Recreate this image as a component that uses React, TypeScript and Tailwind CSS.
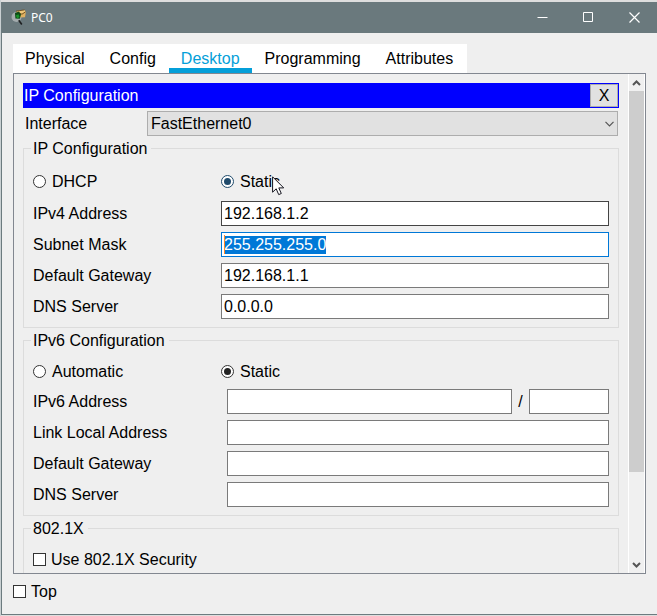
import { useEffect, useRef, type ReactNode } from "react";

const inputClass =
  "block h-[25px] w-full min-w-0 border bg-white px-[2px] leading-[19px] text-black outline-none selection:bg-[#0078d7] selection:text-white";

const tabs = ["Physical", "Config", "Desktop", "Programming", "Attributes"];

function PacketIcon() {
  return (
    <svg width="16" height="17" viewBox="0 0 16 17" aria-hidden="true">
      <circle cx="5.5" cy="8" r="5" fill="#a3abad" />
      <path d="M5 2.2 13 .8l1.8 2.4-.8 5L8 8.5z" fill="#e0b060" />
      <path d="M5.5 2.2 13.5 1l1.2 1.6L10.5 5z" fill="#f0c878" />
      <path d="M5 2.2 13.5.9M8 4.2l3 1 3.6-2.4" stroke="#5a3c14" strokeWidth=".8" fill="none" />
      <path d="M4 4 8 2.6l2 3-1.2 4.2-4.4-.2z" fill="#0d4a16" />
      <path d="M4.8 6.6 7.5 5.2l1 2.8-2.3 1.6z" fill="#17952a" />
      <path d="m7.8 11.2 3 4.3" stroke="#1d1f20" strokeWidth="1.6" />
    </svg>
  );
}

function Group({ title, children }: { title: string; children: ReactNode }) {
  return (
    <fieldset className="min-w-0 border border-[#dcdcdc] px-[7px] pb-2">
      <legend className="h-[19px] pr-1 pl-[2px] leading-[19px]">{title}</legend>
      <div className="px-[2px]">{children}</div>
    </fieldset>
  );
}

function Radio({
  name,
  label,
  checked = false,
  tone = "border-[#333333] before:bg-[#222222]",
  children,
}: {
  name: string;
  label: string;
  checked?: boolean;
  tone?: string;
  children?: ReactNode;
}) {
  return (
    <label className="relative flex h-[19px] items-center gap-[6px]">
      <input
        type="radio"
        name={name}
        defaultChecked={checked}
        className={`grid size-[13px] shrink-0 appearance-none place-content-center rounded-full border bg-white before:size-[7px] before:rounded-full before:opacity-0 checked:before:opacity-100 ${tone}`}
      />
      {label}
      {children}
    </label>
  );
}

function Check({ label }: { label: string }) {
  return (
    <label className="flex h-[19px] items-center gap-[5px]">
      <input
        type="checkbox"
        className="size-[13px] shrink-0 appearance-none border border-[#333333] bg-white checked:bg-[#333333]"
      />
      {label}
    </label>
  );
}

function Row({ id, label, wide = false, children }: { id: string; label: string; wide?: boolean; children: ReactNode }) {
  return (
    <div className="flex items-center">
      <label htmlFor={id} className={`shrink-0 leading-[19px] ${wide ? "w-[194px]" : "w-[188px]"}`}>
        {label}
      </label>
      <div className="relative flex min-w-0 flex-1 items-center">{children}</div>
    </div>
  );
}

export default function App() {
  const mask = useRef<HTMLInputElement>(null);

  useEffect(() => {
    mask.current?.focus();
    mask.current?.select();
  }, []);

  return (
    <div className="flex h-screen flex-col border-l border-[#c9d0d2] bg-[#dedede] pt-[2px] pb-px font-['Liberation_Sans',Arial,sans-serif] text-base text-black">
      <div className="flex min-h-0 flex-1 flex-col border-b border-l border-[#6c7b7f] bg-[#efefef]">
        <header className="flex h-[31px] shrink-0 items-center bg-[#6a797d] pl-[9px] text-white">
          <PacketIcon />
          <h1 className="ml-1 flex-1 font-['Noto_Sans','Open_Sans',sans-serif] text-xs">PC0</h1>
          <button aria-label="Minimize" className="grid h-full w-[46px] place-content-center">
            <svg width="11" height="11" viewBox="0 0 11 11" stroke="currentColor">
              <path d="M.5 5.5h10" />
            </svg>
          </button>
          <button aria-label="Maximize" className="grid h-full w-[46px] place-content-center">
            <svg width="11" height="11" viewBox="0 0 11 11" stroke="currentColor" fill="none">
              <path d="M.5.5h9v9h-9z" />
            </svg>
          </button>
          <button aria-label="Close" className="grid h-full w-[46px] place-content-center">
            <svg width="11" height="11" viewBox="0 0 11 11" stroke="currentColor" strokeWidth="1.2">
              <path d="m.5.5 10 10m0-10-10 10" />
            </svg>
          </button>
        </header>

        <div className="flex min-h-0 flex-1 flex-col px-[11px] pt-[11px]">
          <nav className="flex h-[29px] shrink-0 gap-px self-start bg-white pr-[2px]">
            {tabs.map((tab) => (
              <button
                key={tab}
                className={`px-3 leading-[29px] ${
                  tab === "Desktop" ? "text-[#049fd9] shadow-[inset_0_-5px_0_#049fd9]" : ""
                }`}
              >
                {tab}
              </button>
            ))}
          </nav>

          <main className="flex min-h-0 flex-1 border border-[#828790]">
            <div className="flex min-w-0 flex-1 flex-col gap-[3px] overflow-y-auto px-[9px] pt-[9px] [scrollbar-width:none]">
              <div className="flex h-[25px] shrink-0 items-center bg-[#0000ff] p-px text-white">
                <h2 className="flex-1">IP Configuration</h2>
                <button aria-label="Close IP Configuration" className="h-[23px] w-7 border border-[#adadad] bg-[#e1e1e1] leading-[21px] text-black">
                  X
                </button>
              </div>

              <div className="flex h-[25px] shrink-0 items-center pr-px pl-[2px]">
                <label htmlFor="interface" className="w-[122px] shrink-0">
                  Interface
                </label>
                <div className="relative flex-1">
                  <select
                    id="interface"
                    className="block h-[25px] w-full appearance-none border border-[#adadad] bg-[#e1e1e1] px-[3px] leading-[19px] outline-none"
                  >
                    <option>FastEthernet0</option>
                  </select>
                  <svg
                    className="pointer-events-none absolute top-[10px] right-1"
                    width="9"
                    height="6"
                    viewBox="0 0 9 6"
                    fill="none"
                    stroke="#555555"
                    strokeWidth="1.2"
                  >
                    <path d="m.5.8 4 4 4-4" />
                  </svg>
                </div>
              </div>

              <Group title="IP Configuration">
                <div className="flex pt-[14px] pb-[10px]">
                  <div className="w-[188px]">
                    <Radio name="ipv4" label="DHCP" />
                  </div>
                  <Radio name="ipv4" label="Static" checked tone="border-[#1f4a6b] before:bg-[#1f4a6b]">
                    <svg
                      className="pointer-events-none absolute top-1 left-[51px]"
                      width="13"
                      height="20"
                      viewBox="0 0 13 20"
                    >
                      <path
                        d="M.6.8v15.4l3.6-3.4 2.5 5.8 2.6-1.1-2.5-5.6h4.9z"
                        fill="#ffffff"
                        stroke="#15151f"
                      />
                    </svg>
                  </Radio>
                </div>
                <div className="flex flex-col gap-[6px]">
                  <Row id="ip4" label="IPv4 Address">
                    <input id="ip4" defaultValue="192.168.1.2" className={`${inputClass} border-[#444444]`} />
                  </Row>
                  <Row id="mask" label="Subnet Mask">
                    <input
                      id="mask"
                      ref={mask}
                      defaultValue="255.255.255.0"
                      className={`${inputClass} border-[#0078d7]`}
                    />
                    <span className="absolute top-[3px] left-[3px] h-[19px] w-px bg-[#ff8728]" />
                  </Row>
                  <Row id="gw4" label="Default Gateway">
                    <input id="gw4" defaultValue="192.168.1.1" className={`${inputClass} border-[#7a7a7a]`} />
                  </Row>
                  <Row id="dns4" label="DNS Server">
                    <input id="dns4" defaultValue="0.0.0.0" className={`${inputClass} border-[#7a7a7a]`} />
                  </Row>
                </div>
              </Group>

              <Group title="IPv6 Configuration">
                <div className="flex pt-3 pb-2">
                  <div className="w-[188px]">
                    <Radio name="ipv6" label="Automatic" />
                  </div>
                  <Radio name="ipv6" label="Static" checked />
                </div>
                <div className="flex flex-col gap-[6px]">
                  <Row id="ip6" label="IPv6 Address" wide>
                    <input id="ip6" className={`${inputClass} border-[#7a7a7a]`} />
                    <span className="w-[17px] shrink-0 text-center">/</span>
                    <div className="w-20 shrink-0">
                      <input aria-label="Prefix length" className={`${inputClass} border-[#7a7a7a]`} />
                    </div>
                  </Row>
                  <Row id="link" label="Link Local Address" wide>
                    <input id="link" className={`${inputClass} border-[#7a7a7a]`} />
                  </Row>
                  <Row id="gw6" label="Default Gateway" wide>
                    <input id="gw6" className={`${inputClass} border-[#7a7a7a]`} />
                  </Row>
                  <Row id="dns6" label="DNS Server" wide>
                    <input id="dns6" className={`${inputClass} border-[#7a7a7a]`} />
                  </Row>
                </div>
              </Group>

              <Group title="802.1X">
                <div className="pt-3">
                  <Check label="Use 802.1X Security" />
                </div>
              </Group>
            </div>

            <div className="flex w-[17px] shrink-0 flex-col border-x border-white bg-[#f0f0f0]">
              <button aria-label="Scroll up" className="grid h-[17px] shrink-0 place-content-center">
                <svg width="9" height="6" viewBox="0 0 9 6" fill="none" stroke="#555555" strokeWidth="2">
                  <path d="m1 5 3.5-3.5L8 5" />
                </svg>
              </button>
              <div className="min-h-0 flex-1">
                <div className="h-[82%] bg-[#cdcdcd]" />
              </div>
              <button aria-label="Scroll down" className="grid h-[17px] shrink-0 place-content-center">
                <svg width="9" height="6" viewBox="0 0 9 6" fill="none" stroke="#555555" strokeWidth="2">
                  <path d="m1 1 3.5 3.5L8 1" />
                </svg>
              </button>
            </div>
          </main>

          <footer className="flex h-10 shrink-0 items-start pt-2">
            <Check label="Top" />
          </footer>
        </div>
      </div>
    </div>
  );
}
